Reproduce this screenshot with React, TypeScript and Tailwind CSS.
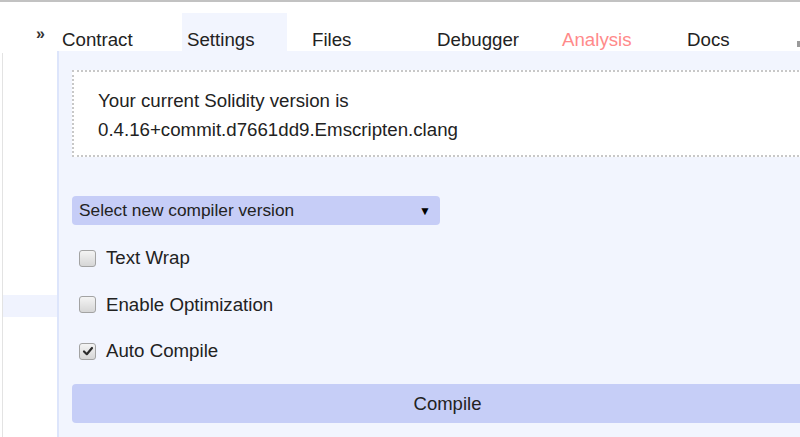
import React from 'react';

const tabs = ['Contract', 'Settings', 'Files', 'Debugger', 'Analysis', 'Docs'];

const options = [
  { label: 'Text Wrap', checked: false },
  { label: 'Enable Optimization', checked: false },
  { label: 'Auto Compile', checked: true },
];

function Checkbox({ checked }: { checked: boolean }) {
  return (
    <div className="w-[17px] h-[17px] rounded-[3px] border border-[#a3a3a3] bg-gradient-to-b from-[#f4f4f4] to-[#d6d6d6] flex items-center justify-center">
      {checked && (
        <svg width="12" height="12" viewBox="0 0 12 12">
          <path d="M2 6.5 L4.8 9.2 L10 3" fill="none" stroke="#2b2b2b" strokeWidth="2.2" strokeLinecap="round" strokeLinejoin="round" />
        </svg>
      )}
    </div>
  );
}

export default function App() {
  return (
    <div
      className="w-[800px] h-[437px] overflow-hidden bg-white border-t-2 border-[#c2c2c2] text-[#222]"
      style={{ fontFamily: '"Liberation Sans", Arial, sans-serif' }}
    >
      {/* Tab bar */}
      <div className="flex h-[49px]">
        <div className="w-[57px] shrink-0 pl-[36px] pt-[24px] text-[16px] leading-none font-bold text-[#333]">»</div>
        <div className="flex gap-[20px]">
          {tabs.map(tab => (
            <div
              key={tab}
              className={
                'w-[105px] h-[38px] mt-[11px] pl-[5px] pt-[16px] text-[18.7px] leading-[22px] shrink-0 ' +
                (tab === 'Settings' ? 'bg-[#f2f5fe] ' : '') +
                (tab === 'Analysis' ? 'text-[#ff8a8a]' : 'text-[#222]')
              }
            >
              {tab}
            </div>
          ))}
        </div>
        <div className="ml-[10px] mt-[39px] w-[3px] h-[6px] bg-[#9a9a9a] shrink-0" />
      </div>

      {/* Body */}
      <div className="flex h-[386px]">
        {/* Side column */}
        <div className="w-[57px] shrink-0 pl-[2px] pt-[2px]">
          <div className="h-full border-l border-[#e3e3e3] pt-[242px]">
            <div className="h-[22px] bg-[#f0f3fe]" />
          </div>
        </div>

        {/* Settings panel */}
        <div className="w-[766px] shrink-0 border-l-2 border-[#dde5fb] bg-[#f2f5fe] pl-[13px] pt-[19px]">
          <div className="h-[87px] bg-white border-2 border-dotted border-[#c8c8c8] pl-[24px] pt-[14px] text-[18.7px] leading-[29px]">
            <div>Your current Solidity version is</div>
            <div>0.4.16+commit.d7661dd9.Emscripten.clang</div>
          </div>

          <div className="mt-[39px] w-[368px] h-[29px] rounded-[4px] bg-[#c6cdf7] flex items-center justify-between pl-[7px] pr-[9px] text-[17.3px]">
            <span>Select new compiler version</span>
            <span className="text-[12px] text-black">▼</span>
          </div>

          <div className="mt-[10px]">
            {options.map(opt => (
              <div key={opt.label} className="h-[46.5px] flex items-center pl-[7px] gap-[10px] text-[18.7px]">
                <Checkbox checked={opt.checked} />
                <span>{opt.label}</span>
              </div>
            ))}
          </div>

          <div className="mt-[9.5px] h-[39px] rounded-[4px] bg-[#c6cef7] flex items-center justify-center text-[18.5px]">
            Compile
          </div>
        </div>
      </div>
    </div>
  );
}
